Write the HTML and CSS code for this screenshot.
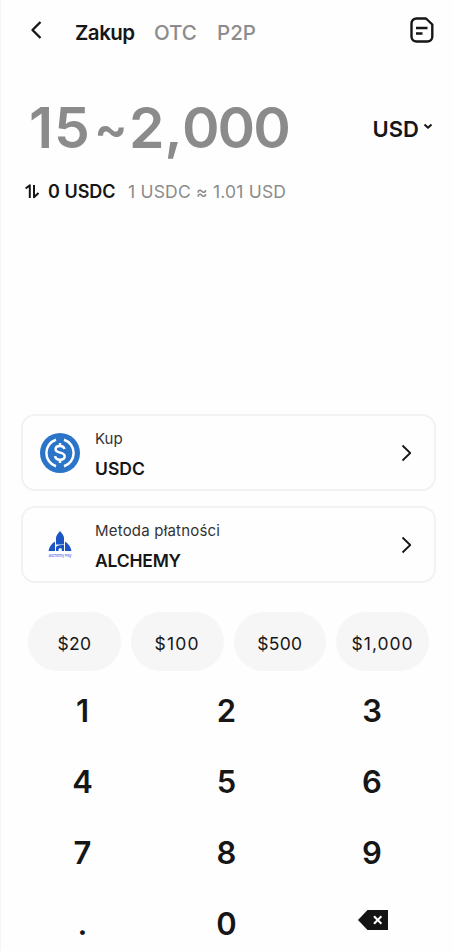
FILE: index.html
```html
<!DOCTYPE html>
<html lang="pl">
<head>
<meta charset="utf-8">
<title>Zakup</title>
<link rel="stylesheet" href="styles.css">
</head>
<body>
<main class="app">
  <header class="top">
    <svg class="back" width="12" height="20" viewBox="0 0 12 20"><path d="M10.500 2 2.500 10l8 8"/></svg>
    <nav class="tabs">
      <span class="tab tab-active">Zakup</span>
      <span class="tab tab-otc">OTC</span>
      <span class="tab tab-p2p">P2P</span>
    </nav>
    <svg class="orders" width="24" height="26" viewBox="0 0 24 26"><path d="M6.500 1.500H16L22.300 7.500V19.500a5 5 0 0 1-5 5H6.500a5 5 0 0 1-5-5V6.500a5 5 0 0 1 5-5zM6 11h11.500M6 16.500h6.500"/></svg>
  </header>

  <section class="amount">
    <div class="value"><span class="v1">15</span><span class="v2">~</span><span class="v3">2,</span><span class="v4">000</span></div>
    <div class="currency"><span>USD</span><svg width="10" height="7" viewBox="0 0 10 7"><path d="m1.500 1.500 3.500 3.300 3.500-3.300"/></svg></div>
  </section>

  <section class="rate">
    <svg class="swap" width="15" height="15" viewBox="0 0 15 15"><path d="M.6 4.500 4.800 1.200V14M9 1v12.300l4.500-4.200"/></svg>
    <span class="receive">0 USDC</span>
    <span class="quote">1 USDC ≈ 1.01 USD</span>
  </section>

  <section class="cards">
    <div class="card">
      <svg class="logo" width="40" height="40" viewBox="0 0 40 40">
        <circle cx="20" cy="20" r="20" fill="#2b75c9"/>
        <g fill="none" stroke="#fff" stroke-width="2.500">
          <path d="M16 6.700a14 14 0 0 0 0 26.600M24 6.700a14 14 0 0 1 0 26.600"/>
          <path d="M24.500 16c-.5-2-2.100-2.900-4.500-2.900-2.700 0-4.400 1.100-4.400 3.100 0 4.700 9.100 2.200 9.100 7 0 2.300-2 3.500-4.700 3.500-2.900 0-4.600-1.300-4.900-3.600M20 10v3M20 27v3"/>
        </g>
      </svg>
      <div class="info"><span class="label kup">Kup</span><span class="name usdc">USDC</span></div>
      <svg class="go" width="11" height="18" viewBox="0 0 11 18"><path d="m1.500 1.500 7.700 7.500-7.700 7.500"/></svg>
    </div>
    <div class="card">
      <svg class="logo" width="40" height="40" viewBox="0 0 40 40">
        <g fill="#1b55c4">
          <path d="M20 6c2 2.200 4 4.500 4 7v6.500h-8V13c0-2.500 2-4.800 4-7z"/>
          <path d="M15 16.500V26H8.500c.8-4 3-7.500 6.500-9.500zM25 16.500c3.500 2 5.700 5.500 6.500 9.500H25z"/>
          <path d="M16 26v-4q1.500-2.500 8-2v6h-2.300v-2.500q-2.700-.8-3.200 1V26z"/>
        </g>
        <text class="brand" x="8.500" y="32" textLength="23">Alchemy Pay</text>
      </svg>
      <div class="info"><span class="label metoda">Metoda płatności</span><span class="name alchemy">ALCHEMY</span></div>
      <svg class="go" width="11" height="18" viewBox="0 0 11 18"><path d="m1.500 1.500 7.700 7.500-7.700 7.500"/></svg>
    </div>
  </section>

  <section class="presets">
    <div class="preset">$20</div>
    <div class="preset p100">$100</div>
    <div class="preset p500">$500</div>
    <div class="preset p1000">$1,000</div>
  </section>

  <section class="keypad">
    <div class="key">1</div><div class="key">2</div><div class="key">3</div>
    <div class="key">4</div><div class="key">5</div><div class="key">6</div>
    <div class="key">7</div><div class="key">8</div><div class="key">9</div>
    <div class="key">.</div><div class="key">0</div>
    <div class="key key-del"><svg width="30" height="20" viewBox="0 0 30 20"><path d="M9.500 0H30v20H9.500L0 10z" fill="#141414"/><path d="m16 6.200 7.400 7.600m0-7.600L16 13.800" fill="none" stroke="#fff" stroke-width="2"/></svg></div>
  </section>
</main>
</body>
</html>
```

FILE: styles.css
```css
* { box-sizing: border-box; }
body {
  margin: 0;
  background: #fefefe;
  color: #161616;
  font-family: Inter, "Open Sans", sans-serif;
  overflow: hidden;
}
.app {
  height: 951px;
  border-left: 1px solid #f5f5f5;
  overflow: hidden;
}
svg { display: block; flex: none; }
.back, .orders, .currency svg, .swap, .go {
  fill: none;
  stroke: #161616;
  stroke-width: 2.4;
  stroke-linejoin: round;
}
.top {
  display: flex;
  align-items: center;
  height: 64px;
  padding: 0 19px 0 29px;
}
.back { margin-bottom: 4px; }
.tabs { display: flex; margin-left: 33px; gap: 20px; line-height: 30px; padding-top: 1px; }
.tab { font-size: 20.5px; font-weight: 500; color: #8c8c8c; white-space: nowrap; }
.tab-active { width: 59px; font-weight: 600; color: #161616; letter-spacing: -0.5px; }
.tab-otc { width: 43px; }
.tab-p2p { width: 40px; }
.orders { margin-left: auto; margin-bottom: 4px; }
.amount {
  display: flex;
  justify-content: space-between;
  align-items: center;
  height: 128px;
  padding: 0 20px 0 28px;
}
.value {
  display: flex;
  font-size: 57px;
  font-weight: 600;
  line-height: 70px;
  color: #8b8b8b;
}
.v1 { width: 65px; letter-spacing: 1px; }
.v2 { width: 35px; font-size: 50px; }
.v3 { width: 53px; }
.v4 { letter-spacing: -2px; }
.currency {
  display: flex;
  align-items: center;
  gap: 4px;
  font-size: 22px;
  font-weight: 600;
  line-height: 30px;
  padding-top: 1px;
  white-space: nowrap;
}
.currency svg { margin-bottom: 5px; stroke-width: 2; }
.rate {
  display: flex;
  align-items: center;
  height: 24px;
  margin-top: -13px;
  padding-left: 24px;
  white-space: nowrap;
}
.swap { stroke-width: 2; }
.receive { width: 88px; padding-left: 8px; font-size: 18px; font-weight: 600; }
.quote { font-size: 17.5px; color: #8b8b8b; font-weight: 400; letter-spacing: 0.2px; }
.cards {
  display: grid;
  gap: 15px;
  margin-top: 211px;
  padding: 0 17px 0 20px;
}
.card {
  display: flex;
  align-items: center;
  height: 77px;
  padding: 0 22px 0 17px;
  border: 2px solid #f2f2f2;
  border-radius: 14px;
}
.info { display: flex; flex-direction: column; margin-left: 15px; padding-top: 2px; white-space: nowrap; }
.label { font-size: 15px; line-height: 30px; color: #333; }
.metoda { letter-spacing: 0.2px; }
.name { font-size: 17.5px; font-weight: 600; line-height: 30px; }
.alchemy { letter-spacing: -0.2px; }
.go { margin-left: auto; stroke-width: 1.8; }
.brand { font-size: 3.8px; font-weight: 600; fill: #6f7ff0; }
.presets {
  display: grid;
  grid-template-columns: repeat(4, 1fr);
  gap: 10px;
  margin-top: 29px;
  padding: 0 24px 0 27px;
}
.preset {
  height: 59px;
  border-radius: 30px;
  background: #f6f6f6;
  font-size: 17.5px;
  line-height: 63px;
  letter-spacing: 0.3px;
  text-align: center;
}
.p100 { letter-spacing: 1.2px; }
.p1000 { letter-spacing: 1px; }
.keypad {
  display: grid;
  grid-template-columns: 143px 145px 146px;
  grid-auto-rows: 71.2px;
  margin: 3.500px 0 0 10px;
}
.key {
  display: flex;
  align-items: center;
  justify-content: center;
  font-size: 31px;
  font-weight: 600;
}
.key-del { padding: 0 0 7px 1px; }
```
